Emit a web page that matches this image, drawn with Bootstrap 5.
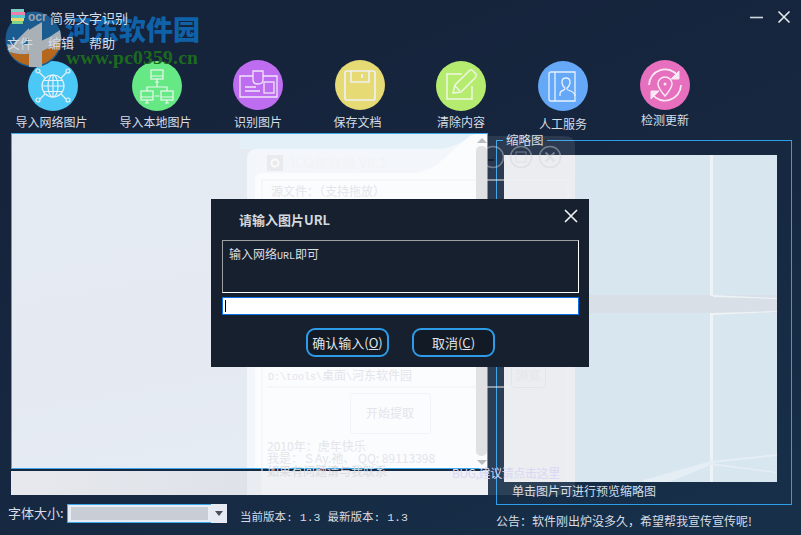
<!DOCTYPE html>
<html lang="en">
<head>
    <meta charset="UTF-8">
    <meta name="viewport" content="width=device-width, initial-scale=1">
    <link href="https://cdn.jsdelivr.net/npm/bootstrap@5.3.2/dist/css/bootstrap.min.css" rel="stylesheet">
    <script src="https://cdn.jsdelivr.net/npm/bootstrap@5.3.2/dist/js/bootstrap.bundle.min.js"></script>
    <title>简易文字识别</title>
    <style>
        body { margin: 0; background: #16243a; font-family: "Noto Sans CJK SC", "Liberation Sans", sans-serif; }
        .app-frame { width: 801px; height: 535px; overflow: hidden; color: #d6dde5; font-size: 12px; line-height: 1;
            background: linear-gradient(158deg, #15233a 0%, #16263e 45%, #17304a 100%); }

        /* title + menu */
        .title-row { height: 33px; padding: 9px 10px 0 11px; z-index: 2; }
        .app-logo { width: 15px; height: 16px; margin-right: 24px; }
        .app-title { font-size: 13px; padding-top: 2px; }
        .win-btns { gap: 13px; margin-top: 1px; }
        .menu-row { height: 18px; padding-left: 7px; gap: 15px; font-size: 13px; z-index: 2; }

        /* toolbar */
        .tool-row { display: grid; grid-template-columns: 104px 101px 102px 101px 102px 102px 50px; margin-top: 9px; padding-left: 28px; height: 73px; }
        .tool-item { width: 50px; }
        .tool-disc { display: block; width: 50px; height: 50px; }
        .tool-text { white-space: nowrap; margin-top: 5px; font-size: 12px; }
        .tool-item.low { padding-top: 1px; }
        .tool-text.nudge-a { padding-right: 3px; }
        .tool-text.nudge-b { padding-right: 5px; }
        .tool-text.down { margin-top: 7px; }
        .tool-text.mid { margin-top: 6px; }
        .tool-text.up { margin-top: 4px; }

        /* main area */
        .left-col { width: 480px; margin-left: 8px; }
        .right-col { width: 296px; margin-left: 8px; padding-top: 7px; }
        .ocr-pane { height: 336px; margin-left: 3px; border: 1px solid #3ba9ec;
            background: linear-gradient(170deg, #e5ebf3 0%, #e5eaf2 60%, #e6ecf3 100%); }
        .pane-foot { height: 24px; margin: 2px 0 0 3px; background: linear-gradient(90deg, #e6e8ed 0%, #dde2e8 60%, #dbe2e8 100%); }

        .pane-scroll { left: 476px; top: 135px; width: 11px; height: 332px; }
        .scroll-up { width: 0; height: 0; border: 5px solid transparent; border-top: 0; border-bottom: 5px solid #b9bcc2; margin: 3px auto 0; }
        .scroll-down { width: 0; height: 0; border: 5px solid transparent; border-bottom: 0; border-top: 5px solid #b9bcc2; margin: 4px auto 2px; }
        .scroll-thumb { width: 11px; margin-top: 3px; border-radius: 5px; background: #e0e1e3; flex: 1; }

        .foot-left { padding-top: 9px; }
        .font-label { width: 59px; padding-top: 2px; font-size: 13px; white-space: nowrap; }
        .font-combo { width: 160px; height: 19px; }
        .combo-field { flex: 1; padding: 2px 3px; border: 1px solid #3ba9ec; border-right: 0; background: #e8edf4; }
        .combo-fill { height: 100%; background: #c9ced6; width: 137px; }
        .combo-arrow { width: 16px; background: #e6ebf3; }
        .combo-caret { width: 0; height: 0; border: 4px solid transparent; border-bottom: 0; border-top: 5px solid #4b4f57; }
        .version-text { margin-left: 13px; padding-top: 8px; white-space: nowrap; font-family: "Liberation Mono", "Noto Sans CJK SC", monospace; font-size: 11.5px; }

        .thumb-box { height: 365px; border: 1px solid #2e9ee6; padding: 14px 0 0 7px; }
        .thumb-legend { top: -7px; left: 6px; padding: 0 3px; background: #16283f; font-size: 12.5px; }
        .thumb-pic { display: block; width: 273px; height: 327px; }
        .thumb-note { margin: 3px 0 0 8px; }
        .notice-text { margin-top: 10px; white-space: nowrap; }

        /* window left behind the app */
        .ghost-layer { pointer-events: none; }
        .ghost-art { display: block; }
        .ghost-text { position: absolute; white-space: nowrap; color: #e3e5ea; }
        .gt-title { left: 291px; top: 155px; font-size: 14px; color: #f1f3f7; }
        .gt-src { left: 271px; top: 185px; }
        .gt-path { left: 268px; top: 369px; font-family: "Liberation Mono", "Noto Sans CJK SC", monospace; font-size: 10px; }
        .gt-path b { font-family: "Noto Sans CJK SC", sans-serif; font-size: 12px; font-weight: 400; }
        .gt-start { left: 366px; top: 407px; }
        .gt-browse { left: 516px; top: 369px; }
        .gt-l1 { left: 267px; top: 440px; }
        .gt-l2 { left: 267px; top: 452px; }
        .gt-l3 { left: 267px; top: 465px; color: #d9dbe1; }
        .gt-bug { left: 452px; top: 467px; color: #d8d8f4; letter-spacing: -.4px; }

        /* watermark */
        .mark-layer { pointer-events: none; z-index: 1; }
        .mark-cn { left: 65px; top: 15px; font-size: 27px; font-weight: 900; color: #0f62a8; white-space: nowrap; }
        .mark-url { left: 66px; top: 48px; font-family: "Liberation Serif", serif; font-weight: 700; font-size: 19.5px; letter-spacing: .25px; color: #1d6a1e; white-space: nowrap; }
        .mark-ocr { left: 28px; top: 11px; font-family: "Liberation Sans", sans-serif; font-weight: 700; font-size: 12px; color: #9aa3ad; }

        /* dialog */
        .url-dialog { left: 211px; top: 199px; width: 378px; height: 168px; background: #17202e; color: #d8dde2; z-index: 3; }
        .url-head { height: 41px; padding: 0 11px 0 28px; }
        .url-title { font-size: 13px; font-weight: 700; color: #d3d9df; }
        .url-close { width: 14px; height: 14px; line-height: 0; margin-top: -7px; }
        .url-body { padding: 0 10px 0 11px; }
        .url-hint.form-control { height: 53px; padding: 6px; border-width: 1px; border-style: solid; border-color: #a0a0a0 #fff #fff #a0a0a0; border-radius: 0; background: transparent; color: #d8dde2; font-size: 12px; line-height: 1.1; box-shadow: none; }
        .url-hint i { font-family: "Liberation Mono", monospace; font-size: 10px; font-style: normal; }
        .url-input.form-control { height: 18px; min-height: 0; margin-top: 4px; padding: 2px; border: 1px solid #0a72e6; border-radius: 0; background: #fff; box-shadow: none; }
        .url-caret { display: block; width: 1px; height: 12px; background: #000; }
        .url-actions { margin-top: 13px; gap: 23px; padding-left: 84px; }
        .url-btn.btn { width: 83px; height: 29px; padding: 0; border: 2px solid #2d9be8; border-radius: 9px; background: #121a26; color: #e0e4e8; font-size: 13px; line-height: 1; }
    </style>
</head>
<body>
<div class="app-frame position-relative d-flex flex-column">

    <div class="title-row position-relative d-flex align-items-start">
        <svg class="app-logo" viewBox="0 0 15 16">
            <rect x="0" y="0" width="13" height="3" fill="#7ccfc0"/>
            <rect x="0" y="3" width="14" height="3" fill="#ee7fa8"/>
            <rect x="0" y="6" width="14" height="3" fill="#59c7cf"/>
            <rect x="0" y="9" width="13" height="3" fill="#e9d66a"/>
            <rect x="1" y="12" width="11" height="3" fill="#7ed28a"/>
        </svg>
        <span class="app-title">简易文字识别</span>
        <div class="win-btns d-flex ms-auto">
            <svg width="14" height="14" viewBox="0 0 14 14"><path d="M0 7.5H13" stroke="#cfd6dd" stroke-width="1.6"/></svg>
            <svg width="14" height="14" viewBox="0 0 14 14"><path d="M1.5 1.5L12.5 12.5M12.5 1.5L1.5 12.5" stroke="#e6ebf0" stroke-width="1.6"/></svg>
        </div>
    </div>
    <div class="menu-row position-relative d-flex align-items-center">
        <span>文件</span><span>编辑</span><span>帮助</span>
    </div>

    <div class="tool-row">
        <div class="tool-item low d-flex flex-column align-items-center">
            <svg class="tool-disc" viewBox="0 0 50 50" fill="none" stroke="#e6f1f8" stroke-width="1.2">
                <circle cx="25" cy="25" r="25" fill="#4bc8f5" stroke="none"/>
                <circle cx="25" cy="25" r="11"/>
                <ellipse cx="25" cy="25" rx="5" ry="11"/>
                <path d="M14 25H36M15.5 19.5H34.5M15.5 30.5H34.5M25 14V36"/>
                <path d="M17 17L12 12M33 17L38 12M17 33L12 38M33 33L38 38"/>
                <circle cx="10" cy="10" r="2"/><circle cx="40" cy="10" r="2"/><circle cx="10" cy="39" r="2"/><circle cx="40" cy="39" r="2"/>
            </svg>
            <span class="tool-text nudge-a">导入网络图片</span>
        </div>
        <div class="tool-item low d-flex flex-column align-items-center">
            <svg class="tool-disc" viewBox="0 0 50 50" fill="none" stroke="#e9f7ee" stroke-width="1.2">
                <circle cx="25" cy="25" r="25" fill="#66e884" stroke="none"/>
                <rect x="19" y="9" width="12" height="9"/><path d="M19 15H31M23 21H27M25 18V21"/>
                <path d="M25 21V26M15 30V26H35V30"/>
                <rect x="9" y="30" width="12" height="9"/><path d="M9 36H21M13 42H17M15 39V42"/>
                <rect x="29" y="30" width="12" height="9"/><path d="M29 36H41M33 42H37M35 39V42M22.5 35H27.5"/>
            </svg>
            <span class="tool-text nudge-a">导入本地图片</span>
        </div>
        <div class="tool-item d-flex flex-column align-items-center">
            <svg class="tool-disc" viewBox="0 0 50 50" fill="none" stroke="#f0e6fa" stroke-width="1.3">
                <circle cx="25" cy="25" r="25" fill="#be6cf0" stroke="none"/>
                <path d="M20 16H7V37H44V16H30"/>
                <path d="M20 11H30V20Q30 24 25 24Q20 24 20 20Z"/>
                <rect x="31" y="22" width="10" height="11"/>
                <path d="M12 27H23M12 31H27"/>
            </svg>
            <span class="tool-text mid">识别图片</span>
        </div>
        <div class="tool-item d-flex flex-column align-items-center">
            <svg class="tool-disc" viewBox="0 0 50 50" fill="none" stroke="#eef0f2" stroke-width="1.7">
                <circle cx="25" cy="25" r="25" fill="#e6da75" stroke="none"/>
                <path d="M12 11H38Q40 11 40 13V38Q40 40 38 40H12Q10 40 10 38V13Q10 11 12 11Z"/>
                <path d="M16 11V22H34V11M27 14V18"/>
            </svg>
            <span class="tool-text mid nudge-b">保存文档</span>
        </div>
        <div class="tool-item low d-flex flex-column align-items-center">
            <svg class="tool-disc" viewBox="0 0 50 50" fill="none" stroke="#eef6e2" stroke-width="1.5">
                <circle cx="25" cy="25" r="25" fill="#b5ec6f" stroke="none"/>
                <path d="M26 13H11V38H36V25"/>
                <path d="M17 32L19 24L33 10Q35 8 37 10L40 13Q41 15 39 17L25 31Z"/>
                <path d="M19 25L24 30"/>
            </svg>
            <span class="tool-text">清除内容</span>
        </div>
        <div class="tool-item low d-flex flex-column align-items-center">
            <svg class="tool-disc" viewBox="0 0 50 50" fill="none" stroke="#e8f1fc" stroke-width="1.3">
                <circle cx="25" cy="25" r="25" fill="#65a8f8" stroke="none"/>
                <path d="M13 11H37V40H13Q11 40 11 38V13Q11 11 13 11Z"/>
                <path d="M17 11V40"/>
                <path d="M22 35V33Q22 30 26 29Q27 28.5 27 27Q24 25 24 21Q24 17 28 17Q32 17 32 21Q32 25 29 27Q29 28.5 30 29Q37 31 37 35"/>
            </svg>
            <span class="tool-text down">人工服务</span>
        </div>
        <div class="tool-item d-flex flex-column align-items-center">
            <svg class="tool-disc" viewBox="0 0 50 50" fill="none" stroke="#f8e8f3" stroke-width="1.8">
                <circle cx="25" cy="25" r="25" fill="#e66fbe" stroke="none"/>
                <path d="M9 25A16 16 0 0 1 38 16"/>
                <path d="M41 25A16 16 0 0 1 12 34"/>
                <path d="M39 11V19H31Z" fill="#f8e8f3" stroke-width="1"/>
                <path d="M11 39V31H19Z" fill="#f8e8f3" stroke-width="1"/>
                <path d="M25 36Q18 28 18 24A7 7 0 0 1 32 24Q32 28 25 36Z" stroke-width="1.5"/>
                <circle cx="25" cy="24" r="1.5" fill="#f8e8f3" stroke="none"/>
            </svg>
            <span class="tool-text up">检测更新</span>
        </div>
    </div>

    <div class="d-flex">
        <div class="left-col d-flex flex-column">
            <div class="ocr-pane"></div>
            <div class="pane-foot"></div>
            <div class="foot-left d-flex">
                <span class="font-label">字体大小:</span>
                <div class="font-combo d-flex">
                    <div class="combo-field"><div class="combo-fill"></div></div>
                    <div class="combo-arrow d-flex align-items-center justify-content-center"><span class="combo-caret"></span></div>
                </div>
                <span class="version-text">当前版本: 1.3 最新版本: 1.3</span>
            </div>
        </div>
        <div class="right-col">
            <div class="thumb-box position-relative">
                <span class="thumb-legend position-absolute">缩略图</span>
                <svg class="thumb-pic" viewBox="0 0 273 327">
                    <rect width="273" height="327" fill="#d8e6f0"/>
                    <rect y="140" width="273" height="18" fill="#d9dfe7"/>
                    <path d="M206 0H209V141H206ZM206 158H209V327H206Z" fill="#eef3f6"/>
                    <path d="M209 140L273 143V144L209 142ZM209 158L273 156V157L209 160Z" fill="#eef3f6"/>
                    <path d="M140 325L207 306L273 299V301L207 308L273 317V318L207 310L165 327H140Z" fill="#e4eef4"/>
                </svg>
                <div class="thumb-note">单击图片可进行预览缩略图</div>
            </div>
            <div class="notice-text">公告：软件刚出炉没多久，希望帮我宣传宣传呢!</div>
        </div>
    </div>

    <!-- faded window showing through the app -->
    <div class="ghost-layer position-absolute top-0 start-0">
        <svg class="ghost-art" width="801" height="535" viewBox="0 0 801 535" fill="none">
            <path d="M240 134H476V149H240Z" fill="#e3f0f8"/>
            <path d="M247 468V159Q247 149 257 149H440Q456 147 470 137L476 134H487V468Z" fill="#f3f6fa"/>
            <path d="M255 468V181Q255 173 263 173H415Q430 172 442 160L466 139Q470 135 476 134H487V468Z" fill="#fbfcfe"/>
            <rect x="247" y="471" width="241" height="24" fill="#f0f1f4"/>
            <rect x="247" y="471" width="15" height="24" fill="#e9ecf0"/>
            <path d="M488 136H565Q575 136 575 146V495H488Z" fill="#fff" fill-opacity=".095"/>
            <path d="M504 155H575V482H504Z" fill="#ecedf0"/>
            <path d="M262 205V180H568V482M262 367V495M267 387H545" stroke="#f0f1f4"/>
            <rect x="350.5" y="393.5" width="80" height="40" rx="3" stroke="#f2f3f7"/>
            <rect x="511.5" y="362.5" width="34" height="25" rx="3" stroke="#e4e5e8"/>
            <rect x="267" y="155" width="16" height="16" fill="#e9eaed"/>
            <circle cx="275" cy="163" r="3.5" stroke="#fafafa" stroke-width="2"/>
            <g stroke="#cfd1d6" stroke-opacity=".45" stroke-width="1.5">
                <circle cx="493" cy="157" r="10.5"/>
                <circle cx="521" cy="157" r="10.5"/>
                <circle cx="550" cy="157" r="10.5"/>
                <rect x="516" y="152" width="10" height="10" stroke-width="1"/>
                <path d="M545.5 152.5L554.5 161.5M554.5 152.5L545.5 161.5" stroke-width="2"/>
            </g>
            <path d="M488 160H494" stroke="#0f1826" stroke-width="1.5"/>
        </svg>
        <span class="ghost-text gt-title">ICO提取器 V0.1</span>
        <span class="ghost-text gt-src">源文件：（支持拖放）</span>
        <span class="ghost-text gt-path">D:\tools\<b>桌面</b>\<b>河东软件园</b></span>
        <span class="ghost-text gt-start">开始提取</span>
        <span class="ghost-text gt-browse">浏览</span>
        <span class="ghost-text gt-l1">2010年：虎年快乐</span>
        <span class="ghost-text gt-l2">我是：ＳAy.祂、 QQ: 89113398</span>
        <span class="ghost-text gt-l3">如果有问题请与我联系</span>
        <span class="ghost-text gt-bug">BUG,建议请点击这里</span>
    </div>

    <!-- pane scrollbar, over the faded window -->
    <div class="pane-scroll position-absolute d-flex flex-column">
        <div class="scroll-up"></div>
        <div class="scroll-thumb"></div>
        <div class="scroll-down"></div>
    </div>

    <!-- site watermark -->
    <div class="mark-layer position-absolute top-0 start-0">
        <svg width="70" height="72" viewBox="0 0 70 72">
            <circle cx="33.5" cy="39.5" r="28" fill="#1a5c90"/>
            <path d="M9 52Q36 60 61 40A28 28 0 0 1 9 52Z" fill="#b5681d"/>
            <path d="M7 44Q34 50 60 30L61.500 40Q36 60 9 52Z" fill="#a9b0b6"/>
            <path d="M29 30L42 22V67H29Z" fill="#a9b0b6"/>
            <path d="M13 44L29 28V37L21 47Z" fill="#a9b0b6"/>
        </svg>
        <span class="mark-ocr position-absolute">ocr</span>
        <span class="mark-cn position-absolute">河东软件园</span>
        <span class="mark-url position-absolute">www.pc0359.cn</span>
    </div>

    <!-- url prompt -->
    <div class="url-dialog modal-content position-absolute rounded-0 border-0">
        <div class="url-head d-flex align-items-center justify-content-between">
            <span class="url-title">请输入图片URL</span>
            <span class="url-close">
                <svg width="14" height="14" viewBox="0 0 14 14"><path d="M1 1L13 13M13 1L1 13" stroke="#f2f4f6" stroke-width="1.6"/></svg>
            </span>
        </div>
        <div class="url-body">
            <div class="url-hint form-control">输入网络<i>URL</i>即可</div>
            <div class="url-input form-control"><span class="url-caret"></span></div>
            <div class="url-actions d-flex">
                <button type="button" class="url-btn btn">确认输入(<u>O</u>)</button>
                <button type="button" class="url-btn btn">取消(<u>C</u>)</button>
            </div>
        </div>
    </div>
</div>
</body>
</html>
